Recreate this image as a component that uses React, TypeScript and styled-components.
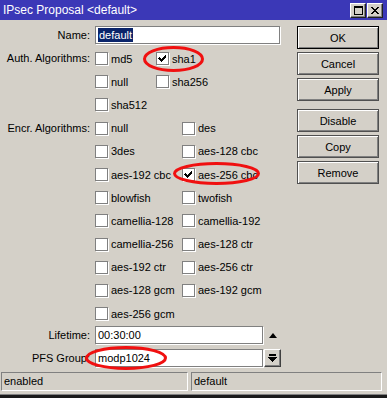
import styled, { createGlobalStyle } from "styled-components";

const GlobalStyle = createGlobalStyle`
  html, body {
    margin: 0;
    padding: 0;
    background: #d4d0c8;
  }
  body {
    font-family: "Liberation Sans", Arial, sans-serif;
    font-size: 11px;
    color: #000;
  }
`;

const Window = styled.div`
  width: 387px;
  height: 398px;
  display: flex;
  flex-direction: column;
  background: #d4d0c8;
  overflow: hidden;
`;

const TitleBar = styled.div`
  flex: 0 0 20px;
  display: flex;
  align-items: center;
  justify-content: space-between;
  padding: 0 4px 0 3px;
  background: #3b38b7;
  color: #fff;
  font-size: 12px;
`;

const TitleButtons = styled.div`
  display: flex;
  gap: 1px;
`;

const TitleButton = styled.div`
  width: 16px;
  height: 15px;
  box-sizing: border-box;
  background: #d4d0c8;
  border: 1px solid;
  border-color: #fff #202020 #202020 #fff;
  box-shadow: inset -1px -1px 0 #808080;
  display: flex;
  align-items: center;
  justify-content: center;
`;

const Body = styled.div`
  flex: 1;
  display: flex;
  padding: 6px 8px 0 0;
`;

const Form = styled.div`
  width: 297px;
  display: flex;
  flex-direction: column;
`;

const Field = styled.div<{ $top?: number }>`
  display: grid;
  grid-template-columns: 90px auto;
  column-gap: 5px;
  margin-top: ${(p) => p.$top ?? 0}px;
`;

const Label = styled.div<{ $h: number }>`
  text-align: right;
  height: ${(p) => p.$h}px;
  line-height: ${(p) => p.$h}px;
  white-space: nowrap;
`;

const Controls = styled.div`
  position: relative;
  display: flex;
  align-items: center;
`;

const TextBox = styled.div<{ $w: number }>`
  width: ${(p) => p.$w}px;
  height: 18px;
  box-sizing: border-box;
  background: #fff;
  border: 1px solid #808080;
  box-shadow: 1px 1px 0 #fff;
  padding: 0 2px;
  display: flex;
  align-items: center;
  white-space: nowrap;
`;

const Selected = styled.span`
  background: #0a246a;
  color: #fff;
  padding: 0 1px;
  line-height: 14px;
`;

const UpArrow = styled.span`
  margin-left: 6px;
  width: 0;
  height: 0;
  border-left: 4.5px solid transparent;
  border-right: 4.5px solid transparent;
  border-bottom: 5px solid #000;
`;

const DropButton = styled.div`
  width: 17px;
  height: 18px;
  margin-left: 1px;
  box-sizing: border-box;
  background: #d4d0c8;
  border: 1px solid;
  border-color: #fff #404040 #404040 #fff;
  box-shadow: inset -1px -1px 0 #808080;
  display: flex;
  align-items: center;
  justify-content: center;
`;

const CheckGrid = styled.div<{ $col: number }>`
  display: grid;
  grid-template-columns: ${(p) => p.$col}px auto;
  grid-auto-rows: 23.2px;
  align-items: center;
`;

const CheckItem = styled.div`
  position: relative;
  display: flex;
  align-items: center;
  gap: 3px;
  white-space: nowrap;
`;

const Box = styled.span`
  width: 13px;
  height: 13px;
  box-sizing: border-box;
  background: #fff;
  border: 1px solid #808080;
  box-shadow: 1px 1px 0 #fff;
  display: flex;
  align-items: center;
  justify-content: center;
  flex: 0 0 auto;
`;

const Mark = styled.svg<{ $x: number; $y: number }>`
  position: absolute;
  left: ${(p) => p.$x}px;
  top: ${(p) => p.$y}px;
  overflow: visible;
  pointer-events: none;
`;

const ButtonColumn = styled.div`
  width: 82px;
  display: flex;
  flex-direction: column;
  gap: 3px;
`;

const Button = styled.div<{ $default?: boolean; $space?: number }>`
  height: 23px;
  box-sizing: border-box;
  margin-top: ${(p) => p.$space ?? 0}px;
  border: 1px solid ${(p) => (p.$default ? "#000" : "#505050")};
  box-shadow: inset 1px 1px 0 #fff, inset -1px -1px 0 #808080;
  display: flex;
  align-items: center;
  justify-content: center;
  background: #d4d0c8;
`;

const StatusBar = styled.div`
  flex: 0 0 19px;
  display: flex;
  gap: 3px;
  padding-left: 1px;
  margin-bottom: 3px;
`;

const StatusPanel = styled.div<{ $w: number }>`
  width: ${(p) => p.$w}px;
  box-sizing: border-box;
  border: 1px solid;
  border-color: #808080 #fff #fff #808080;
  padding: 0 2px;
  line-height: 17px;
`;

const BottomEdge = styled.div`
  flex: 0 0 3px;
  background: #1a1a1a;
  border-top: 1px solid #808080;
`;

const Ring = ({ x, y, w, h }: { x: number; y: number; w: number; h: number }) => (
  <Mark $x={x} $y={y} width={w} height={h}>
    <ellipse
      cx={w / 2}
      cy={h / 2}
      rx={w / 2 - 1.5}
      ry={h / 2 - 1.5}
      fill="none"
      stroke="#f01010"
      strokeWidth={3}
    />
  </Mark>
);

const Check = ({ label, checked, ring }: { label: string; checked?: boolean; ring?: [number, number, number, number] }) => (
  <CheckItem>
    <Box>
      {checked && (
        <svg width="9" height="9" viewBox="0 0 9 9" shapeRendering="crispEdges">
          <path d="M1 3h1v1h1v1h1v-1h1v-1h1v-1h1v-1h1v3h-1v1h-1v1h-1v1h-1v1h-1v-1h-1v-1h-1v-1h-1z" fill="#000" />
        </svg>
      )}
    </Box>
    <span>{label}</span>
    {ring && <Ring x={ring[0]} y={ring[1]} w={ring[2]} h={ring[3]} />}
  </CheckItem>
);

const auth: [string, boolean?][] = [["md5"], ["sha1", true], ["null"], ["sha256"], ["sha512"]];

const encr: [string, boolean?][] = [
  ["null"], ["des"],
  ["3des"], ["aes-128 cbc"],
  ["aes-192 cbc"], ["aes-256 cbc", true],
  ["blowfish"], ["twofish"],
  ["camellia-128"], ["camellia-192"],
  ["camellia-256"], ["aes-128 ctr"],
  ["aes-192 ctr"], ["aes-256 ctr"],
  ["aes-128 gcm"], ["aes-192 gcm"],
  ["aes-256 gcm"],
];

const App = () => (
  <>
    <GlobalStyle />
    <Window>
      <TitleBar>
        <span>IPsec Proposal &lt;default&gt;</span>
        <TitleButtons>
          <TitleButton>
            <svg width="9" height="9" viewBox="0 0 9 9" shapeRendering="crispEdges">
              <path d="M0 0h9v9h-9z M1 2v6h7v-6z" fill="#000" fillRule="evenodd" />
            </svg>
          </TitleButton>
          <TitleButton>
            <svg width="8" height="7" viewBox="0 0 8 7" shapeRendering="crispEdges">
              <path d="M0 0h2l2 2.5 2-2.5h2l-3 3.5 3 3.5h-2l-2-2.5-2 2.5h-2l3-3.5z" fill="#000" />
            </svg>
          </TitleButton>
        </TitleButtons>
      </TitleBar>
      <Body>
        <Form>
          <Field>
            <Label $h={18}>Name:</Label>
            <Controls>
              <TextBox $w={185}>
                <Selected>default</Selected>
              </TextBox>
            </Controls>
          </Field>
          <Field $top={3}>
            <Label $h={23.2}>Auth. Algorithms:</Label>
            <CheckGrid $col={61}>
              {auth.map(([l, c]) => (
                <Check key={l} label={l} checked={c} ring={c ? [-13, -6.5, 61, 26] : undefined} />
              ))}
            </CheckGrid>
          </Field>
          <Field>
            <Label $h={23.2}>Encr. Algorithms:</Label>
            <CheckGrid $col={87}>
              {encr.map(([l, c]) => (
                <Check key={l} label={l} checked={c} ring={c ? [-9, -6, 87, 23] : undefined} />
              ))}
            </CheckGrid>
          </Field>
          <Field $top={1}>
            <Label $h={18}>Lifetime:</Label>
            <Controls>
              <TextBox $w={168}>00:30:00</TextBox>
              <UpArrow />
            </Controls>
          </Field>
          <Field $top={5}>
            <Label $h={18}>PFS Group:</Label>
            <Controls>
              <TextBox $w={168}>modp1024</TextBox>
              <DropButton>
                <svg width="9" height="9" viewBox="0 0 9 9" shapeRendering="crispEdges">
                  <path d="M1 0h7v2h-7z M0 3h9l-4.5 5z" fill="#000" />
                </svg>
              </DropButton>
              <Ring x={-10} y={-3} w={82} h={24} />
            </Controls>
          </Field>
        </Form>
        <ButtonColumn>
          <Button $default>OK</Button>
          <Button>Cancel</Button>
          <Button>Apply</Button>
          <Button $space={5}>Disable</Button>
          <Button>Copy</Button>
          <Button>Remove</Button>
        </ButtonColumn>
      </Body>
      <StatusBar>
        <StatusPanel $w={187}>enabled</StatusPanel>
        <StatusPanel $w={191}>default</StatusPanel>
      </StatusBar>
      <BottomEdge />
    </Window>
  </>
);

export default App;
